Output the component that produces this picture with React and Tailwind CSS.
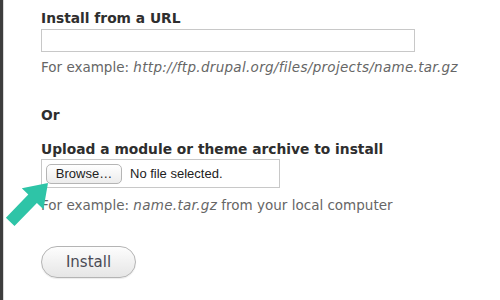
import React from 'react';

const font = { fontFamily: '"DejaVu Sans", Verdana, sans-serif' };
const uiFont = { fontFamily: '"Liberation Sans", Arial, sans-serif' };

const Arrow = () => (
  <svg className="absolute left-0 top-0 pointer-events-none" width="60" height="240" viewBox="0 0 60 240">
    <polygon
      points="48,183 43.4,209.3 36.9,203 14.5,226.1 5.9,217.7 28.3,194.6 21.8,188.3"
      fill="#2ec4a7"
    />
  </svg>
);

const App = () => {
  return (
    <div className="relative w-[500px] h-[300px] bg-white overflow-hidden flex">
      <div className="w-[3px] bg-[#3d3d3d]" />
      <div className="w-px bg-[#d8d8d8]" />

      <div className="flex-1 pl-[37px] pt-[9px] text-[#333]" style={font}>
        {/* Install from URL */}
        <h2 className="text-[13.8px] leading-[18px] font-bold text-[#2e2e2e]">Install from a URL</h2>
        <div className="mt-[2px] w-[374px] h-[23px] border border-[#c8c8c8] bg-white" />
        <p className="mt-[6px] text-[13.5px] leading-[18px] text-[#666]">
          For example: <em className="tracking-[0.3px]">http://ftp.drupal.org/files/projects/name.tar.gz</em>
        </p>

        <h2 className="mt-[30px] text-[13.8px] leading-[18px] font-bold text-[#2e2e2e]">Or</h2>

        {/* Upload archive */}
        <h2 className="mt-[16px] text-[13.8px] leading-[18px] font-bold text-[#2e2e2e]">
          Upload a module or theme archive to install
        </h2>
        <div className="mt-[1px] w-[239px] h-[29px] border border-[#c8c8c8] flex items-center pl-[4px] gap-[8px]">
          <div
            className="h-[20px] w-[76px] rounded-[5px] border border-[#b5b5b5] bg-gradient-to-b from-white to-[#ececec] flex items-center justify-center text-[13px] text-[#222]"
            style={uiFont}
          >
            Browse…
          </div>
          <span className="text-[13px] text-[#222]" style={uiFont}>
            No file selected.
          </span>
        </div>
        <p className="mt-[8px] text-[13.5px] leading-[18px] text-[#666]">
          For example: <em className="tracking-[0.3px]">name.tar.gz</em> from your local computer
        </p>

        <button
          className="mt-[32px] w-[95px] h-[32px] rounded-full border border-[#b4b4b4] bg-gradient-to-b from-[#fdfdfd] to-[#e6e6e6] text-[15px] text-[#4a4a55] shadow-[0_1px_1px_rgba(0,0,0,0.08)]"
          style={font}
        >
          Install
        </button>
      </div>

      <Arrow />
    </div>
  );
};

export default App;
